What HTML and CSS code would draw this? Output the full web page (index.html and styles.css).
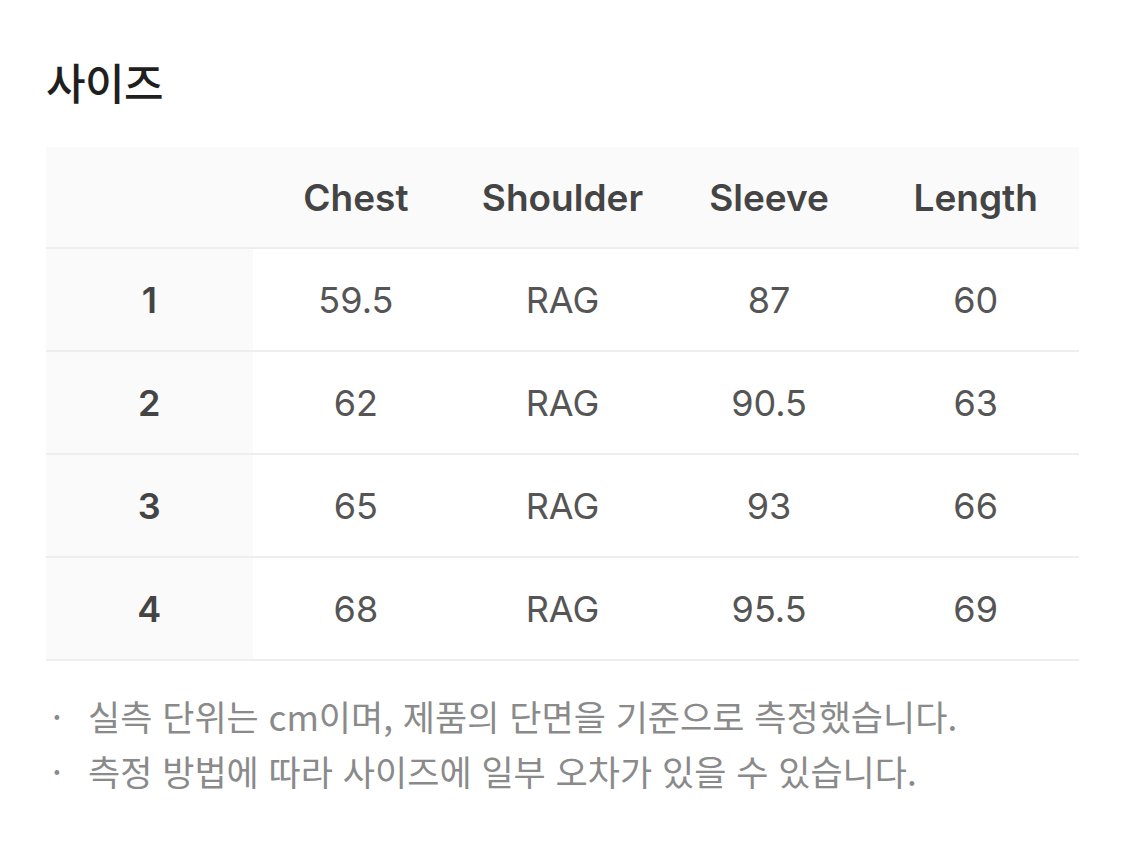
FILE: index.html
```html
<!DOCTYPE html>
<html lang="ko">
<head>
<meta charset="utf-8">
<link rel="stylesheet" href="styles.css">
</head>
<body>
<div class="page">
  <h1 class="title">사이즈</h1>
  <table class="size-table">
    <thead>
      <tr>
        <th class="corner"></th>
        <th>Chest</th>
        <th>Shoulder</th>
        <th>Sleeve</th>
        <th>Length</th>
      </tr>
    </thead>
    <tbody>
      <tr><th class="rowhead">1</th><td>59.5</td><td>RAG</td><td>87</td><td>60</td></tr>
      <tr><th class="rowhead">2</th><td>62</td><td>RAG</td><td>90.5</td><td>63</td></tr>
      <tr><th class="rowhead">3</th><td>65</td><td>RAG</td><td>93</td><td>66</td></tr>
      <tr><th class="rowhead">4</th><td>68</td><td>RAG</td><td>95.5</td><td>69</td></tr>
    </tbody>
  </table>
  <ul class="notes">
    <li>실측 단위는 cm이며, 제품의 단면을 기준으로 측정했습니다.</li>
    <li>측정 방법에 따라 사이즈에 일부 오차가 있을 수 있습니다.</li>
  </ul>
</div>
</body>
</html>
```

FILE: styles.css
```css
html, body {
  margin: 0;
  padding: 0;
  background: #ffffff;
}
body {
  font-family: Inter, "Noto Sans CJK KR", sans-serif;
  color: #444;
}
.page {
  padding: 50px 46px 0 46px;
  width: 1033px;
}
.title {
  margin: 0 0 35px 0;
  font-family: "Noto Sans CJK KR", sans-serif;
  font-size: 43px;
  font-weight: 500;
  line-height: 62px;
  color: #1f1f1f;
  letter-spacing: -0.5px;
}
.size-table {
  width: 1033px;
  border-collapse: collapse;
  table-layout: fixed;
}
.size-table th,
.size-table td {
  width: 20%;
  text-align: center;
  padding: 0;
  font-size: 36px;
}
.size-table thead th {
  height: 100px;
  background: #fafafa;
  font-size: 37px;
  font-weight: 600;
  color: #444;
  border-bottom: 2px solid #eeeeee;
}
.size-table tbody th,
.size-table tbody td {
  height: 101px;
  border-bottom: 2px solid #eeeeee;
}
.size-table tbody td {
  font-weight: 400;
  color: #555;
}
.size-table .rowhead {
  background: #fafafa;
  font-weight: 600;
  color: #444;
}
.notes {
  list-style: none;
  margin: 27px 0 0 0;
  padding: 0;
  font-family: "Noto Sans CJK KR", sans-serif;
  font-size: 35px;
  line-height: 55px;
  color: #8a8a8a;
}
.notes li {
  position: relative;
  padding-left: 42px;
}
.notes li::before {
  content: "·";
  position: absolute;
  left: 6px;
  top: 0;
  color: #8a8a8a;
}
```
